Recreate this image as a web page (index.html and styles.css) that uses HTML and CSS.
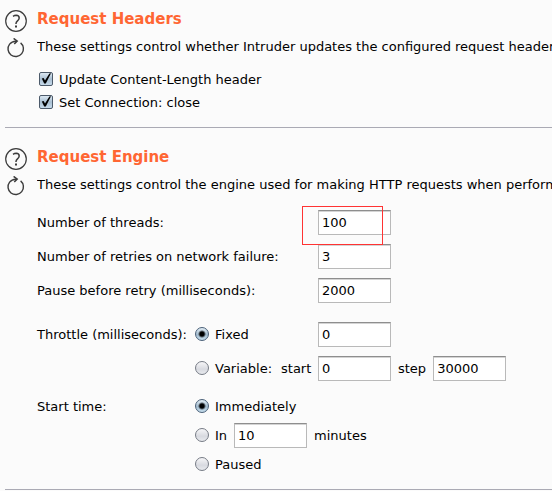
FILE: index.html
```html
<!DOCTYPE html>
<html lang="en">
<head>
<meta charset="utf-8">
<title>Request options</title>
<link rel="stylesheet" href="styles.css">
</head>
<body>
<svg class="sprite" aria-hidden="true">
  <symbol id="help" viewBox="0 0 22 22">
    <circle cx="11" cy="11" r="10.3" fill="none" stroke="#3c3c3c" stroke-width="1.2"/>
    <path d="M8 6.3Q9.5 5.3 11.2 5.3Q14.2 5.4 14.2 8Q14.2 9.3 12.7 10.7Q11 12.1 11 13.5V14" fill="none" stroke="#3c3c3c" stroke-width="1.5"/>
    <rect x="10" y="15.5" width="2" height="2" fill="#3c3c3c"/>
  </symbol>
  <symbol id="reset" viewBox="0 0 22 20">
    <path d="M15.6 4.9A7.7 7.7 0 1 1 4.6 6.2Q6.6 3.4 11 3.2" fill="none" stroke="#3c3c3c" stroke-width="1.4"/>
    <path d="M8.6 0.4L12.2 3.1L9.3 6" fill="none" stroke="#3c3c3c" stroke-width="1.5"/>
  </symbol>
</svg>
<main>
  <section class="panel">
    <div class="tools">
      <button type="button" class="tool" aria-label="Help"><svg class="help"><use href="#help"/></svg></button>
      <button type="button" class="tool" aria-label="Reset"><svg class="reset"><use href="#reset"/></svg></button>
    </div>
    <div class="content">
      <h2>Request Headers</h2>
      <p>These settings control whether Intruder updates the configured request headers</p>
      <div class="checks">
        <label class="check"><input type="checkbox" checked><svg class="tick" viewBox="0 0 14 14"><path d="M2.8 6.5L4.6 6L6 8.6L10.4 1.4L12 1.2L6.8 11.6H5.2Z" fill="#000"/></svg>Update Content-Length header</label>
        <label class="check"><input type="checkbox" checked><svg class="tick" viewBox="0 0 14 14"><path d="M2.8 6.5L4.6 6L6 8.6L10.4 1.4L12 1.2L6.8 11.6H5.2Z" fill="#000"/></svg>Set Connection: close</label>
      </div>
    </div>
  </section>
  <section class="panel">
    <div class="tools">
      <button type="button" class="tool" aria-label="Help"><svg class="help"><use href="#help"/></svg></button>
      <button type="button" class="tool" aria-label="Reset"><svg class="reset"><use href="#reset"/></svg></button>
    </div>
    <div class="content">
      <h2>Request Engine</h2>
      <p>These settings control the engine used for making HTTP requests when performing</p>
      <div class="settings">
        <div class="row">
          <label class="wide" for="threads">Number of threads:</label>
          <div class="field marked"><input type="text" id="threads" value="100"></div>
        </div>
        <div class="row">
          <label class="wide" for="retries">Number of retries on network failure:</label>
          <div class="field"><input type="text" id="retries" value="3"></div>
        </div>
        <div class="row">
          <label class="wide" for="pause">Pause before retry (milliseconds):</label>
          <div class="field"><input type="text" id="pause" value="2000"></div>
        </div>
      </div>
      <div class="settings" role="radiogroup" aria-labelledby="throttle">
        <div class="row">
          <span id="throttle">Throttle (milliseconds):</span>
          <label class="radio"><input type="radio" name="throttle" checked>Fixed</label>
          <div class="field"><input type="text" aria-label="Fixed throttle" value="0"></div>
        </div>
        <div class="row">
          <div class="option">
            <label class="radio"><input type="radio" name="throttle">Variable:</label>
            <label for="start">start</label>
          </div>
          <div class="field"><input type="text" id="start" value="0"><label for="step">step</label><input type="text" id="step" value="30000"></div>
        </div>
      </div>
      <div class="settings times" role="radiogroup" aria-labelledby="time">
        <div class="row">
          <span id="time">Start time:</span>
          <label class="radio"><input type="radio" name="time" checked>Immediately</label>
        </div>
        <div class="row">
          <div class="option delay">
            <label class="radio"><input type="radio" name="time">In</label>
            <input type="text" id="minutes" value="10"><label for="minutes">minutes</label>
          </div>
        </div>
        <div class="row">
          <label class="radio"><input type="radio" name="time">Paused</label>
        </div>
      </div>
    </div>
  </section>
</main>
</body>
</html>
```
FILE: styles.css
```css
*, *::after { box-sizing: border-box; }

body {
  margin: 0;
  background: #fbfbfb;
  color: #000;
  font: 13px/20px "DejaVu Sans", sans-serif;
  overflow-x: hidden;
}

.sprite { position: absolute; width: 0; height: 0; }

.panel {
  display: flex;
  gap: 10px;
  margin-left: 5px;
  padding: 9px 0 13px;
  border-bottom: 1px solid #aaaab4;
}

.panel + .panel { padding-top: 19px; padding-bottom: 12px; }

.tools {
  display: flex;
  flex-direction: column;
  gap: 6px;
  padding-top: 1px;
}

.tool {
  display: block;
  padding: 0;
  border: 0;
  background: none;
}

.tool svg { display: block; width: 22px; }
.help { height: 22px; }
.reset { height: 20px; }

.content { flex: 1; min-width: 0; }

h2 {
  margin: 0 0 8px;
  color: #ff6633;
  font-size: 15px;
  line-height: 20px;
}

p {
  margin: 0;
  white-space: nowrap;
  overflow: hidden;
}

.checks { padding: 11px 0 0 2px; }

.check {
  display: grid;
  grid-template-columns: 14px auto;
  justify-content: start;
  align-items: center;
  column-gap: 6px;
  height: 23px;
}

input { margin: 0; appearance: none; }

.check input, .tick { grid-area: 1 / 1; width: 14px; height: 14px; margin-bottom: 1px; }
.tick { pointer-events: none; visibility: hidden; }
.check input:checked + .tick { visibility: visible; }

input[type="checkbox"] {
  border: 1px solid #4c5a6a;
  border-radius: 2px;
  background: linear-gradient(#dce8f2, #a9bfd2 50%, #c6daea);
}

input[type="radio"] {
  width: 14px;
  height: 14px;
  margin-bottom: 1px;
  border: 1px solid #767b85;
  border-radius: 50%;
  background: linear-gradient(#f6f6f8, #d8dae0 60%, #e8eaee);
}

input[type="radio"]:checked {
  border-color: #4a6078;
  background:
    radial-gradient(circle, #000 0 2px, transparent 4px),
    linear-gradient(#e2edf5, #a3bccf 55%, #c6deed);
}

input[type="text"] {
  width: 73px;
  height: 25px;
  padding: 0 3px;
  border: 1px solid #b9b9b9;
  border-top-color: #8e8e8e;
  background: #fff;
  box-shadow: inset 0 1px #d4d4d4;
  color: #000;
  font: inherit;
}

.settings {
  display: grid;
  gap: 9px;
  padding-top: 15px;
}

.settings + .settings { padding-top: 19px; }
.settings + .times { gap: 4px; padding-top: 13px; }

.row {
  display: grid;
  grid-template-columns: 158px 123px 1fr;
  align-items: center;
  height: 25px;
}

.wide { grid-column: 1 / 3; }

.radio {
  grid-column: 2;
  display: flex;
  align-items: center;
  gap: 6px;
  height: 25px;
}

.option {
  grid-column: 2;
  display: flex;
  align-items: center;
  gap: 9px;
}

.delay { grid-column: 2 / 4; gap: 7px; }

.field {
  grid-column: 3;
  display: flex;
  align-items: center;
  gap: 7px;
}

.marked { position: relative; }

.marked::after {
  content: "";
  position: absolute;
  top: -4px;
  left: -16px;
  width: 81px;
  height: 39px;
  border: 1px solid #ff3333;
  pointer-events: none;
}
```
